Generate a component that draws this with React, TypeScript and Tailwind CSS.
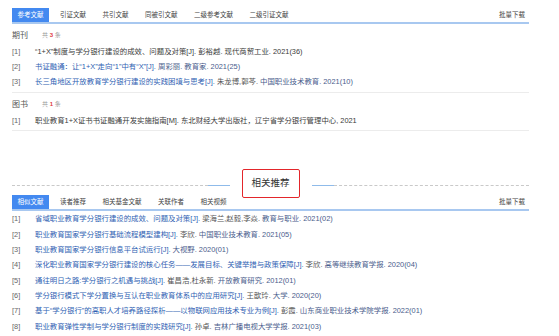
const FONT = "font-['Liberation_Sans','Noto_Sans_CJK_SC',sans-serif]";

type Part = { t: string; c?: 'title' | 'author' | 'src' | 'plain' };
type Entry = Part[];

const refTabs = ['参考文献', '引证文献', '共引文献', '同被引文献', '二级参考文献', '二级引证文献'];
const relTabs = ['相似文献', '读者推荐', '相关基金文献', '关联作者', '相关视频'];

const journals: Entry[] = [
  [{ t: '“1+X”制度与学分银行建设的成效、问题及对策[J]. 彭裕越. 现代商贸工业. 2021(36)', c: 'plain' }],
  [
    { t: '书证融通：让“1+X”走向“1”中有“X”[J]. ', c: 'title' },
    { t: '周彩丽. 教育家. 2021(25)', c: 'src' },
  ],
  [
    { t: '长三角地区开放教育学分银行建设的实践困境与思考[J]. ', c: 'title' },
    { t: '朱龙博,郭芩. ', c: 'author' },
    { t: '中国职业技术教育. 2021(10)', c: 'src' },
  ],
];

const books: Entry[] = [
  [{ t: '职业教育1+X证书书证融通开发实施指南[M]. 东北财经大学出版社，辽宁省学分银行管理中心, 2021', c: 'plain' }],
];

const related: Entry[] = [
  [
    { t: '省域职业教育学分银行建设的成效、问题及对策[J]. ', c: 'title' },
    { t: '梁海兰,赵毅,李焱. ', c: 'author' },
    { t: '教育与职业. 2021(02)', c: 'src' },
  ],
  [
    { t: '职业教育国家学分银行基础流程模型建构[J]. ', c: 'title' },
    { t: '李欣. ', c: 'author' },
    { t: '中国职业技术教育. 2021(05)', c: 'src' },
  ],
  [
    { t: '职业教育国家学分银行信息平台试运行[J]. ', c: 'title' },
    { t: '大视野. 2020(01)', c: 'src' },
  ],
  [
    { t: '深化职业教育国家学分银行建设的核心任务——发展目标、关键举措与政策保障[J]. ', c: 'title' },
    { t: '李欣. ', c: 'author' },
    { t: '高等继续教育学报. 2020(04)', c: 'src' },
  ],
  [
    { t: '通往明日之路:学分银行之机遇与挑战[J]. ', c: 'title' },
    { t: '崔昌浩,杜永新. ', c: 'author' },
    { t: '开放教育研究. 2012(01)', c: 'src' },
  ],
  [
    { t: '学分银行模式下学分置换与互认在职业教育体系中的应用研究[J]. ', c: 'title' },
    { t: '王歆玲. ', c: 'author' },
    { t: '大学. 2020(20)', c: 'src' },
  ],
  [
    { t: '基于“学分银行”的高职人才培养路径探析——以物联网应用技术专业为例[J]. ', c: 'title' },
    { t: '彭霞. ', c: 'author' },
    { t: '山东商业职业技术学院学报. 2022(01)', c: 'src' },
  ],
  [
    { t: '职业教育弹性学制与学分银行制度的实践研究[J]. ', c: 'title' },
    { t: '孙卓. ', c: 'author' },
    { t: '吉林广播电视大学学报. 2021(03)', c: 'src' },
  ],
];

const partColor = {
  title: 'text-[#2f5fb3]',
  author: 'text-[#555]',
  src: 'text-[#4a5d8c]',
  plain: 'text-[#3a3a3a]',
};

function TabBar({ tabs }: { tabs: string[] }) {
  return (
    <div className="flex items-stretch h-[16px] border-b-2 border-[#a8c8f0] pr-[4px]">
      <div className="flex gap-[5.5px]">
        {tabs.map((t, i) => (
          <div
            key={t}
            className={
              i === 0
                ? 'flex items-center px-[5.5px] h-[14px] bg-[#4389f0] text-white text-[6.5px]'
                : 'flex items-center px-[5.5px] h-[14px] text-[#444] text-[6.5px]'
            }
          >
            {t}
          </div>
        ))}
      </div>
      <div className="ml-auto flex items-center h-[14px] text-[6.5px] text-[#444]">批量下载</div>
    </div>
  );
}

function SectionHead({ label, count }: { label: string; count: number }) {
  return (
    <div className="flex items-center h-[20px] pt-[3px]">
      <span className="text-[8px] text-[#555] w-[30px]">{label}</span>
      <span className="text-[6px] text-[#999]">
        共 <span className="text-[#e0383e] font-bold">{count}</span> 条
      </span>
    </div>
  );
}

function RefList({ items, row }: { items: Entry[]; row: string }) {
  return (
    <ul>
      {items.map((parts, i) => (
        <li key={i} className={`flex items-center text-[7.4px] whitespace-nowrap ${row}`}>
          <span className="w-[23px] shrink-0 text-[#666]">[{i + 1}]</span>
          <span>
            {parts.map((p, j) => (
              <span key={j} className={partColor[p.c ?? 'plain']}>
                {p.t}
              </span>
            ))}
          </span>
        </li>
      ))}
    </ul>
  );
}

function Divider() {
  return (
    <div className="flex h-[26px]">
      <div className="flex-1 flex items-center self-start mt-[16px]">
        <div className="flex-1 border-t border-dashed border-[#c9c9c9]" />
        <div className="w-[22px] h-px bg-[#8fbbea]" />
      </div>
      <div className="shrink-0 mx-[12px] h-[29px] w-[58px] flex items-center justify-center border-[1.5px] border-[#e3262b] rounded-[2px] text-[9.5px] text-[#333]">
        相关推荐
      </div>
      <div className="flex-1 flex items-center self-start mt-[16px]">
        <div className="w-[22px] h-px bg-[#8fbbea]" />
        <div className="flex-1 border-t border-dashed border-[#c9c9c9]" />
      </div>
    </div>
  );
}

export default function App() {
  return (
    <div className={`${FONT} w-[559px] h-[336px] bg-white overflow-hidden`}>
      <div className="ml-[12px] w-[517px] pt-[8px]">
        <TabBar tabs={refTabs} />
        <div className="border-b border-[#ececec] pb-[3px]">
          <SectionHead label="期刊" count={3} />
          <RefList items={journals} row="h-[15px]" />
        </div>
        <div className="border-b border-[#ececec] pb-[2px]">
          <SectionHead label="图书" count={1} />
          <RefList items={books} row="h-[15px]" />
        </div>
        <div className="mt-[38px]">
          <Divider />
        </div>
        <TabBar tabs={relTabs} />
        <RefList items={related} row="h-[15.4px]" />
      </div>
    </div>
  );
}
